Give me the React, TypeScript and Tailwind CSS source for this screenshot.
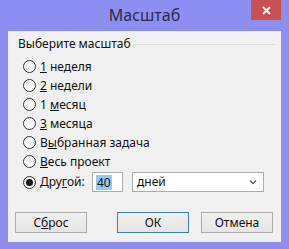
import React from "react";

const font = { fontFamily: '"Noto Sans", "Segoe UI", sans-serif' };

function Radio({ checked }: { checked?: boolean }) {
  return (
    <span className="w-[13px] h-[13px] rounded-full border border-[#333] bg-gradient-to-b from-[#f4f4f4] to-[#ffffff] flex items-center justify-center shrink-0">
      {checked && <span className="w-[7px] h-[7px] rounded-full bg-[#1a1a1a]" />}
    </span>
  );
}

function Row({ children, checked }: { children: React.ReactNode; checked?: boolean }) {
  return (
    <div className="h-[19px] flex items-center pl-[15px]">
      <Radio checked={checked} />
      <span className="ml-[4px] text-[12px] text-[#111] leading-none">{children}</span>
    </div>
  );
}

function Btn({ children, primary }: { children: React.ReactNode; primary?: boolean }) {
  return (
    <div
      className={`w-[72px] h-[21px] flex items-center justify-center text-[12px] text-[#111] border bg-gradient-to-b from-[#f0f0f0] to-[#e5e5e5] ${
        primary ? "border-[#3c7fb1]" : "border-[#acacac]"
      }`}
    >
      {children}
    </div>
  );
}

export default function App() {
  return (
    <div className="w-[289px] h-[249px] bg-[#8d8ff0] flex flex-col" style={font}>
      <div className="h-[31px] relative flex items-center justify-center">
        <span className="text-[16px] text-[#2b2d4e] leading-none -mt-[1px]">Масштаб</span>
        <div className="absolute left-[251px] top-0 w-[30px] h-[20px] bg-[#c75050] flex items-center justify-center">
          <svg width="9" height="9" viewBox="0 0 9 9">
            <path d="M1 1 L8 8 M8 1 L1 8" stroke="#fff" strokeWidth="2" />
          </svg>
        </div>
      </div>
      <div className="mx-[8px] h-[211px] bg-[#f0f0f0] flex flex-col">
        <div className="h-[26px] flex items-center pl-[10px]">
          <span className="text-[12px] text-[#111] leading-none">Выберите масштаб</span>
          <div className="ml-[3px] mr-[6px] flex-1 h-px bg-[#dcdcdc]" />
        </div>
        <Row><u>1</u> неделя</Row>
        <Row><u>2</u> недели</Row>
        <Row>1 <u>м</u>есяц</Row>
        <Row><u>3</u> месяца</Row>
        <Row>В<u>ы</u>бранная задача</Row>
        <Row><u>В</u>есь проект</Row>
        <div className="h-[20px] mt-[1px] flex items-center pl-[15px]">
          <Radio checked />
          <span className="ml-[4px] text-[12px] text-[#111] leading-none w-[52px]">Дру<u>г</u>ой:</span>
          <div className="w-[31px] h-[20px] border border-[#acacac] bg-white flex items-center pl-[3px]">
            <span className="text-[12px] leading-[15px] bg-[#99c9ef] text-[#111] px-px">40</span>
          </div>
          <div className="ml-[9px] w-[132px] h-[20px] border border-[#acacac] bg-white flex items-center pl-[4px] pr-[6px]">
            <span className="text-[12px] text-[#111] leading-none flex-1">дней</span>
            <svg width="8" height="6" viewBox="0 0 8 6">
              <path d="M1 1.5 L4 4.5 L7 1.5" stroke="#6d6d6d" strokeWidth="1.5" fill="none" />
            </svg>
          </div>
        </div>
        <div className="mt-[20px] flex pl-[7px]">
          <Btn>С<u>б</u>рос</Btn>
          <div className="ml-[30px]"><Btn primary>ОК</Btn></div>
          <div className="ml-[12px]"><Btn>Отмена</Btn></div>
        </div>
      </div>
    </div>
  );
}
